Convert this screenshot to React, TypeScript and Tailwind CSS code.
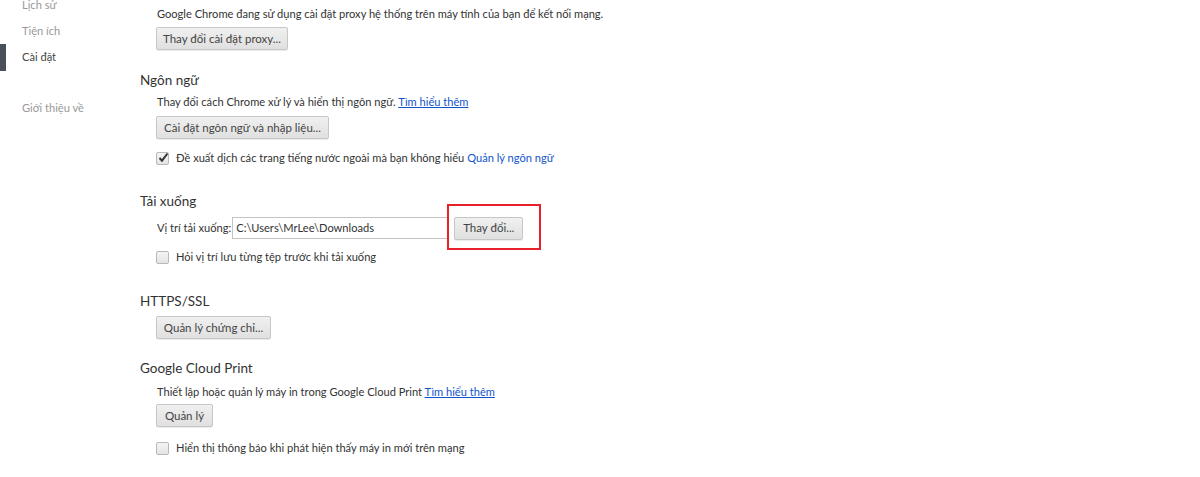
import React from "react";

const font = { fontFamily: 'Lato, "Liberation Sans", sans-serif' };

function Btn({ children, w }: { children: React.ReactNode; w: string }) {
  return (
    <div
      className={`flex h-[23px] items-center justify-center whitespace-nowrap rounded-[2px] border border-[#c6c6c6] bg-gradient-to-b from-[#f0f0f0] to-[#e0e0e0] text-[11.5px] text-[#444] shadow-[0_1px_0_rgba(0,0,0,0.08)] ${w}`}
    >
      {children}
    </div>
  );
}

function Check({ checked }: { checked?: boolean }) {
  return (
    <div className="relative flex h-[13px] w-[13px] shrink-0 items-center justify-center rounded-[2px] border border-[#b8b8b8] bg-gradient-to-b from-[#f4f4f4] to-[#e4e4e4]">
      {checked && (
        <svg width="11" height="11" viewBox="0 0 11 11" className="absolute left-[1px] top-[-1px]">
          <path d="M1.5 6 L4 8.6 L9.5 1.5" fill="none" stroke="#333" strokeWidth="2" />
        </svg>
      )}
    </div>
  );
}

export default function App() {
  return (
    <div className="flex h-[477px] w-[1200px] overflow-hidden bg-white text-[11.1px] text-[#333]" style={font}>
      {/* sidebar */}
      <div className="mt-[-8px] w-[140px] shrink-0 text-[11.1px] text-[#999]">
        <div className="flex h-[26px] items-center pl-[22px]">Lịch sử</div>
        <div className="flex h-[26px] items-center pl-[22px]">Tiện ích</div>
        <div className="flex h-[26px] items-center">
          <div className="h-[27px] w-[6px] bg-[#4a5059]" />
          <div className="pl-[16px] text-[#464646]">Cài đặt</div>
        </div>
        <div className="mt-[25px] flex h-[26px] items-center pl-[22px]">Giới thiệu về</div>
      </div>

      {/* content */}
      <div className="flex flex-col">
        <div className="mt-[5px] whitespace-nowrap pl-[17px] leading-[18px] text-[#333]">
          Google Chrome đang sử dụng cài đặt proxy hệ thống trên máy tính của bạn để kết nối mạng.
        </div>
        <div className="mt-[4px] pl-[16px]">
          <Btn w="w-[132px]">Thay đổi cài đặt proxy...</Btn>
        </div>

        <div className="mt-[20px] text-[13.5px] leading-[20px] text-[#333]">Ngôn ngữ</div>
        <div className="mt-[3px] pl-[17px] leading-[18px]">
          Thay đổi cách Chrome xử lý và hiển thị ngôn ngữ.{" "}
          <span className="text-[#15c] underline">Tìm hiểu thêm</span>
        </div>
        <div className="mt-[5px] pl-[16px]">
          <Btn w="w-[173px]">Cài đặt ngôn ngữ và nhập liệu...</Btn>
        </div>
        <div className="mt-[10px] flex h-[18px] items-center pl-[16px]">
          <Check checked />
          <span className="ml-[7px]">
            Đề xuất dịch các trang tiếng nước ngoài mà bạn không hiểu{" "}
            <span className="text-[#15c]">Quản lý ngôn ngữ</span>
          </span>
        </div>

        <div className="mt-[24px] text-[13.5px] leading-[20px]">Tải xuống</div>
        <div className="mt-[6px] flex h-[22px] items-center pl-[17px]">
          <span>Vị trí tải xuống:</span>
          <div className="ml-[1px] flex h-[22px] w-[216px] items-center border border-[#c4c4c4] bg-white pl-[3px] text-[#333]">
            C:\Users\MrLee\Downloads
          </div>
          <div className="relative ml-[6px]">
            <Btn w="w-[69px]">Thay đổi...</Btn>
            <div className="pointer-events-none absolute left-[-7px] top-[-13px] h-[46px] w-[94px] border-2 border-[#e8202a]" />
          </div>
        </div>
        <div className="mt-[9px] flex h-[18px] items-center pl-[16px]">
          <Check />
          <span className="ml-[7px]">Hỏi vị trí lưu từng tệp trước khi tải xuống</span>
        </div>

        <div className="mt-[25px] text-[13.5px] leading-[20px]">HTTPS/SSL</div>
        <div className="mt-[5px] pl-[16px]">
          <Btn w="w-[115px]">Quản lý chứng chỉ...</Btn>
        </div>

        <div className="mt-[19px] text-[13.5px] leading-[20px]">Google Cloud Print</div>
        <div className="mt-[5px] pl-[17px] leading-[18px]">
          Thiết lập hoặc quản lý máy in trong Google Cloud Print{" "}
          <span className="text-[#15c] underline">Tìm hiểu thêm</span>
        </div>
        <div className="mt-[3px] pl-[16px]">
          <Btn w="w-[57px]">Quản lý</Btn>
        </div>
        <div className="mt-[12px] flex h-[18px] items-center pl-[16px]">
          <Check />
          <span className="ml-[7px]">Hiển thị thông báo khi phát hiện thấy máy in mới trên mạng</span>
        </div>
      </div>
    </div>
  );
}
